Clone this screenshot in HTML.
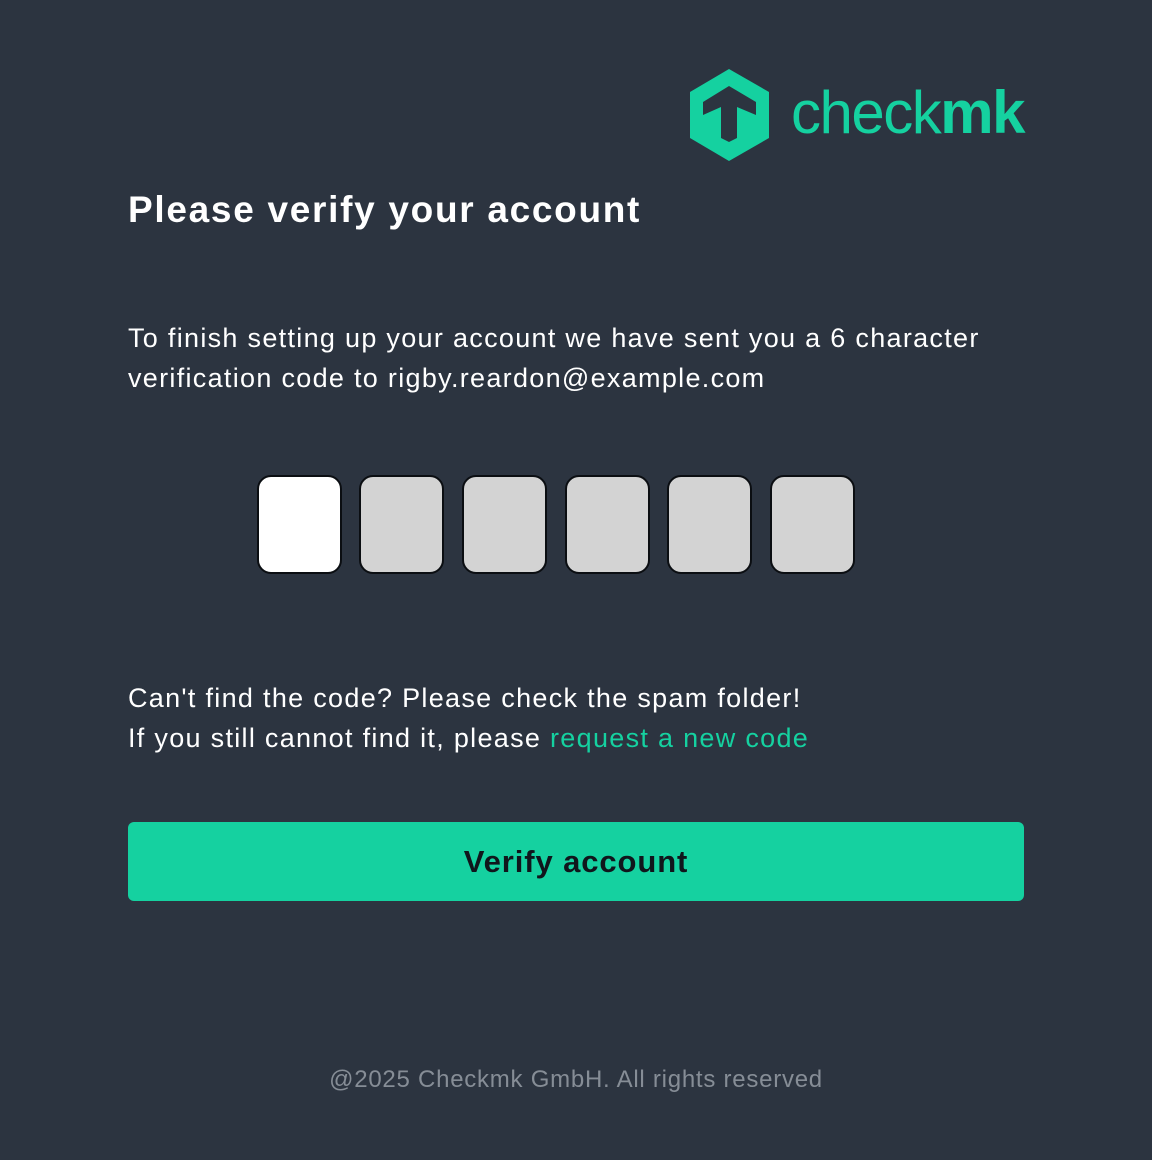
<!DOCTYPE html>
<html><head><meta charset="utf-8"><style>
html,body{margin:0;padding:0;}
body{width:1152px;height:1160px;background:#2c3440;font-family:"Liberation Sans",sans-serif;color:#fff;position:relative;overflow:hidden;}
.abs{position:absolute;white-space:nowrap;}
h1{position:absolute;left:128px;top:186px;margin:0;font-size:37px;font-weight:bold;line-height:48px;letter-spacing:1.7px;}
.p{font-size:27px;line-height:40px;left:128px;letter-spacing:1.3px;}
.box{position:absolute;top:475px;width:81px;height:95px;border:2px solid #0b0e12;border-radius:14px;background:#d3d3d3;}
.btn{position:absolute;left:128px;top:822px;width:896px;height:79px;background:#15d1a0;border-radius:6px;color:#10161c;font-weight:bold;font-size:31px;text-align:center;line-height:79px;letter-spacing:0.9px;}
a{color:#15d1a0;text-decoration:none;}
</style></head><body>
<svg class="abs" style="left:0;top:0" width="1152" height="200">
<polygon points="729,69 769,92 769,138 729,161 690,138 690,92" fill="#15d1a0"/>
<polygon points="729,86 756,102 756,115 737,107 737,138 729,142 721,138 721,107 703,115 703,102" fill="#2c3440"/>
</svg>
<div class="abs" style="left:791px;top:78px;font-size:60px;line-height:70px;color:#15d1a0;letter-spacing:-1.5px;">check<b style="font-weight:600">mk</b></div>
<h1>Please verify your account</h1>
<div class="abs p" style="top:318px">To finish setting up your account we have sent you a 6 character<br>verification code to rigby.reardon@example.com</div>
<div class="box" style="left:257px;background:#fff"></div>
<div class="box" style="left:359px"></div>
<div class="box" style="left:462px"></div>
<div class="box" style="left:565px"></div>
<div class="box" style="left:667px"></div>
<div class="box" style="left:770px"></div>
<div class="abs p" style="top:678px">Can't find the code? Please check the spam folder!<br>If you still cannot find it, please <a>request a new code</a></div>
<div class="btn">Verify account</div>
<div class="abs" style="left:0;width:1152px;text-align:center;top:1064px;font-size:24px;line-height:32px;color:#868d96;letter-spacing:0.75px;">@2025 Checkmk GmbH. All rights reserved</div>
</body></html>
